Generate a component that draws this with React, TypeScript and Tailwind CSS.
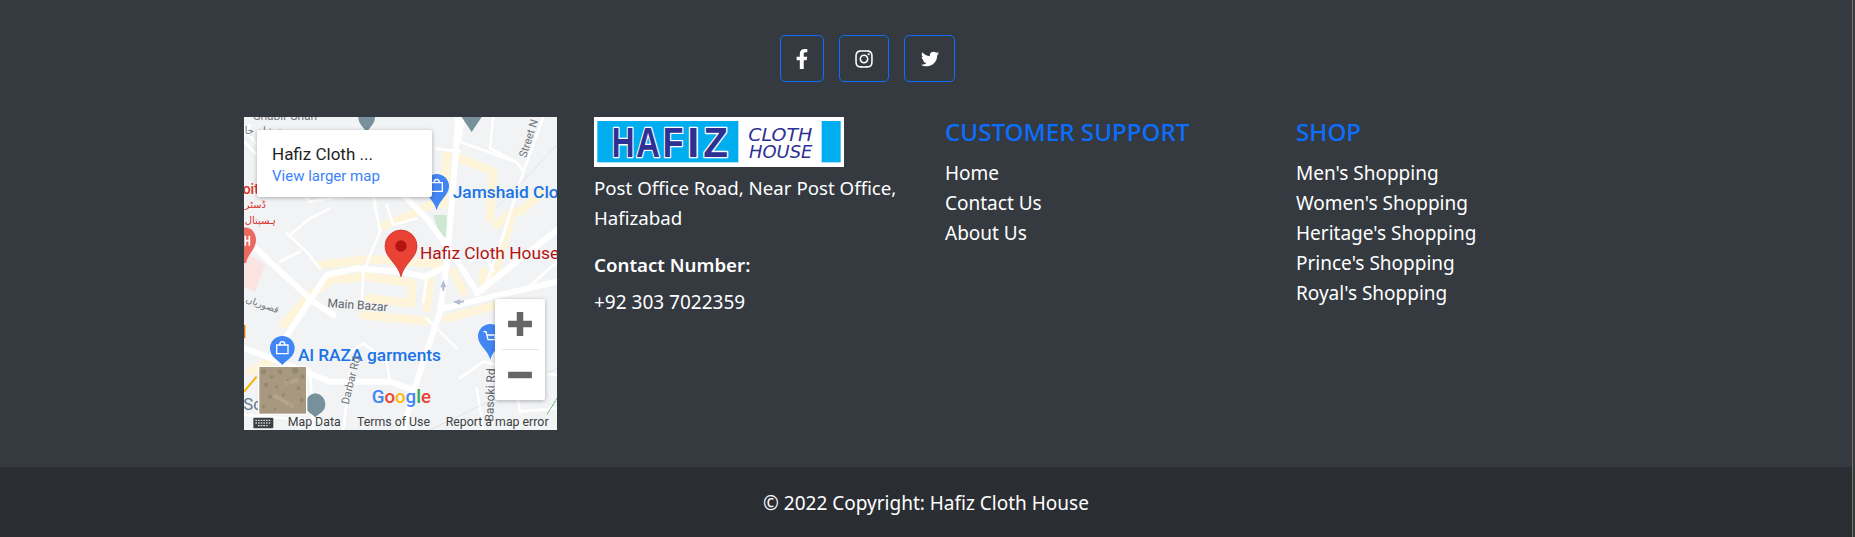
import { FaFacebookF, FaInstagram, FaTwitter } from 'react-icons/fa'

const SOCIALS = [
  { icon: FaFacebookF, size: 'w-[44px]', glyph: 20 },
  { icon: FaInstagram, size: 'w-[50px]', glyph: 20 },
  { icon: FaTwitter, size: 'w-[51px]', glyph: 18 },
]

const SUPPORT_LINKS = ['Home', 'Contact Us', 'About Us']
const SHOP_LINKS = ["Men's Shopping", "Women's Shopping", "Heritage's Shopping", "Prince's Shopping", "Royal's Shopping"]

// coordinates are 3x map pixels, taken with the map's corner at (42, 36)
const THIN_ROADS = [
  'M690 110 L860 172',
  'M940 36 L880 200 L810 420 L760 560',
  'M700 36 L690 110',
  'M790 36 L780 130',
  'M430 270 L450 380 L400 500 L395 590',
  'M470 300 L490 360 L560 340',
  'M180 390 L240 340 L300 310',
  'M170 385 L230 440 L270 490',
  'M150 470 L210 440',
  'M42 70 L130 180 L240 290',
  'M42 110 L110 180',
  'M60 60 L42 90',
  'M240 290 L420 260',
  'M580 590 L590 510',
  'M590 640 L680 730',
  'M350 750 L400 715 L470 770 L480 830',
  'M690 820 L760 770 L880 800 L981 810',
  'M740 850 L760 975',
  'M860 860 L870 920 L981 910',
  'M360 800 L340 975',
  'M240 790 L250 975',
  'M42 930 L300 950',
  'M720 470 L760 440 L790 500',
  'M620 130 L690 140',
  'M780 130 L860 172 L880 200',
  'M880 560 L981 470',
]

const MAIN_ROADS = [
  'M685 36 L665 300 L650 480 L630 620 L550 860 L520 975',
  'M490 240 L590 340 L670 450 L740 560',
  'M165 700 L290 510 L380 490 L510 500 L585 515 L650 485',
  'M640 610 L800 572 L981 530',
  'M42 395 L130 480 L250 590 L310 630',
  'M42 730 L150 770 L300 830 L480 830 L550 855',
  'M981 375 L860 470 L740 565',
]

const YELLOW_ROADS = [
  'M270 480 L420 462 L640 478',
  'M160 660 L230 580 L300 525 L410 515 L545 535 L545 595 L415 580',
  'M400 630 L590 648',
  'M455 365 L560 320 L620 290',
  'M650 150 L640 300',
  'M690 160 L790 200 L780 340',
  'M800 360 L850 320 L800 480',
  'M870 320 L940 260',
  'M670 500 L700 560',
  'M760 500 L760 550 L810 500',
  'M600 520 L590 610',
  'M650 640 L800 600',
  'M60 800 L120 770',
]

const SATELLITE_SPOTS = [
  [100, 800, 8], [125, 815, 6], [150, 800, 7], [195, 797, 9], [218, 815, 6], [108, 840, 7],
  [140, 845, 5], [175, 830, 8], [205, 850, 6], [120, 875, 6], [160, 870, 5], [215, 885, 7],
  [100, 905, 5], [180, 900, 6], [135, 912, 4],
]

function MapCanvas() {
  return (
    <svg viewBox="42 36 939 939" className="block h-full w-full">
      <rect x="42" y="36" width="939" height="939" fill="#f2f3f5" />
      <path d="M42 440 L105 480 L75 560 L42 545 Z" fill="#fbe3e1" />
      <path d="M610 330 L650 330 L650 395 L630 395 Z" fill="#cfe8d2" />
      <g fill="none" strokeLinecap="round" strokeLinejoin="round">
        <g stroke="#fdf4d9" strokeWidth="26">
          {YELLOW_ROADS.map((d) => (
            <path key={d} d={d} />
          ))}
        </g>
        <g stroke="#ffffff" strokeWidth="8">
          {THIN_ROADS.map((d) => (
            <path key={d} d={d} />
          ))}
        </g>
        <g stroke="#ffffff" strokeWidth="18">
          {MAIN_ROADS.map((d) => (
            <path key={d} d={d} />
          ))}
        </g>
        <path d="M981 790 L600 975 M800 310 L981 120" stroke="#dadce0" strokeWidth="2" />
        <path d="M981 880 L950 930" stroke="#5fb36b" strokeWidth="3" strokeDasharray="6 4" />
      </g>

      <path d="M385 36 h50 c0 20 -14 30 -25 45 c-11 -15 -25 -25 -25 -45 Z" fill="#78909c" />
      <path d="M695 36 h60 l-30 45 Z" fill="#78909c" />

      <path d="M640 525 l9 22 h-6 v10 h-6 v-10 h-6 Z" fill="#b1bbd6" />
      <path d="M668 591 l22 -8 v5 l12 -2 v6 l-12 2 v5 Z" fill="#b1bbd6" />

      <g fontFamily="Roboto, sans-serif">
        <text x="70" y="44" fill="#70757a" fontSize="36">Shabir Shah</text>
        <text x="44" y="88" fill="#70757a" fontSize="30" fontFamily="'DejaVu Sans', sans-serif">مسجد شاہ جا</text>
        <text x="38" y="268" fill="#d9332b" fontSize="42" fontWeight="500">oit</text>
        <text x="44" y="310" fill="#d9332b" fontSize="30" fontFamily="'DejaVu Sans', sans-serif">ڈسٹر</text>
        <text x="44" y="356" fill="#d9332b" fontSize="30" fontFamily="'DejaVu Sans', sans-serif">ہسپتال</text>
        <text x="292" y="606" fill="#5f6368" fontSize="36" transform="rotate(4 292 606)">Main Bazar</text>
        <text x="46" y="590" fill="#70757a" fontSize="28" transform="rotate(20 46 590)" fontFamily="'DejaVu Sans', sans-serif">قصوریاں</text>
        <text x="668" y="280" fill="#1a73e8" fontSize="52" fontWeight="500">Jamshaid Clo</text>
        <text x="570" y="462" fill="#b31412" fontSize="52">Hafiz Cloth House</text>
        <text x="204" y="768" fill="#1a73e8" fontSize="52" fontWeight="500">Al RAZA garments</text>
        <text x="888" y="160" fill="#70757a" fontSize="33" transform="rotate(-72 888 160)">Street N</text>
        <text x="348" y="890" fill="#70757a" fontSize="33" transform="rotate(-76 358 890)">Darbar Rd</text>
        <text x="790" y="950" fill="#5f6368" fontSize="36" transform="rotate(-88 790 950)">Basoki Rd</text>
        <text x="40" y="914" fill="#5f7a8c" fontSize="50">Sc</text>
      </g>

      <path d="M513 375 a48 48 0 0 1 48 48 c0 37 -38 50 -48 92 c-10 -42 -48 -55 -48 -92 a48 48 0 0 1 48 -48 Z" fill="#ea4335" stroke="#c5221f" strokeWidth="2" />
      <circle cx="513" cy="423" r="17" fill="#b31412" />

      <path d="M620 207 a37 37 0 0 1 37 37 c0 28 -28 38 -37 72 c-9 -34 -37 -44 -37 -72 a37 37 0 0 1 37 -37 Z" fill="#4285f4" />
      <path d="M603 233 h34 v26 h-34 Z M612 233 a8 10 0 0 1 16 0" fill="none" stroke="#fff" strokeWidth="4" />

      <path d="M157 693 a37 37 0 0 1 37 37 c0 28 -28 38 -37 50 c-9 -12 -37 -22 -37 -50 a37 37 0 0 1 37 -37 Z" fill="#4285f4" />
      <path d="M140 720 h34 v26 h-34 Z M149 720 a8 10 0 0 1 16 0" fill="none" stroke="#fff" strokeWidth="4" />

      <path d="M781 657 a37 37 0 0 1 37 37 c0 28 -28 38 -37 70 c-9 -32 -37 -42 -37 -70 a37 37 0 0 1 37 -37 Z" fill="#4285f4" />
      <path d="M760 680 h8 l6 24 h22 M770 690 h28 l-4 10" fill="none" stroke="#fff" strokeWidth="4" />

      <path d="M40 368 c22 -4 38 14 38 36 c0 30 -24 40 -30 70 L40 474 Z" fill="#ea6a5e" />
      <path d="M46 392 v30 M46 407 h12 M58 392 v30" stroke="#fff" strokeWidth="5" fill="none" />
      <path d="M256 865 a32 32 0 0 1 30 32 c0 24 -20 28 -30 40 c-10 -12 -30 -16 -30 -40 a32 32 0 0 1 30 -32 Z" fill="#78909c" />
      <path d="M42 660 h4 v40 h-4 Z" fill="#e37400" />
      <path d="M42 860 L80 815" stroke="#f4b400" strokeWidth="6" />

      <text x="425" y="895" fontFamily="Roboto, sans-serif" fontSize="56" fontWeight="500">
        <tspan fill="#4285f4">G</tspan>
        <tspan fill="#ea4335">o</tspan>
        <tspan fill="#fbbc05">o</tspan>
        <tspan fill="#4285f4">g</tspan>
        <tspan fill="#34a853">l</tspan>
        <tspan fill="#ea4335">e</tspan>
      </text>

      <rect x="84" y="782" width="148" height="148" rx="6" fill="#ffffff" />
      <rect x="88" y="786" width="140" height="140" fill="#a8987f" />
      {SATELLITE_SPOTS.map(([cx, cy, r]) => (
        <circle key={`${cx}-${cy}`} cx={cx} cy={cy} r={r} fill="#7d7f62" opacity="0.55" />
      ))}
      <path d="M130 870 L190 905 M165 835 L205 825" stroke="#bfae97" strokeWidth="12" opacity="0.6" />

      <rect x="70" y="938" width="60" height="32" rx="3" fill="#3c4043" />
      <path d="M76 946 H124 M76 954 H124 M84 962 H116" stroke="#fff" strokeWidth="3" strokeDasharray="5 3" />

      <g fontFamily="Roboto, sans-serif" fontSize="37" fill="#3c4043">
        <text x="173" y="962">Map Data</text>
        <text x="381" y="962">Terms of Use</text>
        <text x="647" y="962">Report a map error</text>
      </g>
    </svg>
  )
}

function MapEmbed() {
  return (
    <div className="relative h-[313px] w-[313px] overflow-hidden">
      <MapCanvas />
      <div className="absolute left-[13px] top-[13px] h-[67px] w-[175px] rounded-[2px] bg-white pl-[15px] pt-[12px] shadow-[0_1px_4px_rgba(0,0,0,0.3)] [font-family:Roboto,sans-serif]">
        <div className="text-[17px] leading-[24px] text-[#1f1f1f]">Hafiz Cloth ...</div>
        <div className="text-[15px] leading-[20px] text-[#3b82f6]">View larger map</div>
      </div>
      <div className="absolute left-[251px] top-[182px] flex h-[101px] w-[50px] flex-col items-center rounded-[2px] bg-white shadow-[0_1px_4px_rgba(0,0,0,0.3)]">
        <svg viewBox="0 0 24 24" className="mt-[12px] h-[26px] w-[26px]">
          <path d="M9 1h6v8h8v6h-8v8H9v-8H1V9h8z" fill="#666666" />
        </svg>
        <div className="mt-[12px] h-px w-[37px] bg-[#e6e6e6]" />
        <svg viewBox="0 0 24 24" className="mt-[12px] h-[26px] w-[26px]">
          <path d="M1 9h22v6H1z" fill="#666666" />
        </svg>
      </div>
    </div>
  )
}

const HAFIZ_LETTERS = [
  { ch: 'H', x: 95, w: 68 },
  { ch: 'A', x: 168, w: 72 },
  { ch: 'F', x: 248, w: 62 },
  { ch: 'I', x: 322, w: 36 },
  { ch: 'Z', x: 370, w: 74 },
]

function Logo() {
  return (
    <svg viewBox="42 36 750 150" className="block h-[50px] w-[250px]">
      <rect x="42" y="36" width="750" height="150" fill="#ffffff" />
      <rect x="52" y="48" width="423" height="124" fill="#00aeef" />
      <rect x="725" y="48" width="57" height="124" fill="#00aeef" />
      <g fontFamily="'Liberation Sans', sans-serif" fontWeight="700" fontSize="125" strokeLinejoin="round">
        {HAFIZ_LETTERS.map(({ ch, x, w }) => (
          <text key={ch} x={x} y="155" textLength={w} lengthAdjust="spacingAndGlyphs" fill="#2e3192" stroke="#ffffff" strokeWidth="8" paintOrder="stroke">
            {ch}
          </text>
        ))}
      </g>
      <g fontFamily="'DejaVu Sans', sans-serif" fontStyle="italic" fontSize="55" fill="#2e3192">
        <text x="505" y="108" textLength="192" lengthAdjust="spacingAndGlyphs">CLOTH</text>
        <text x="507" y="159" textLength="190" lengthAdjust="spacingAndGlyphs">HOUSE</text>
      </g>
    </svg>
  )
}

function LinkColumn({ title, links }: { title: string; links: string[] }) {
  return (
    <div className="w-[351px]">
      <h5 className="text-[24.2px] font-medium leading-[29px] text-[#0d6efd]">{title}</h5>
      <ul className="mt-[12px]">
        {links.map((link) => (
          <li key={link} className="leading-[30px]">
            {link}
          </li>
        ))}
      </ul>
    </div>
  )
}

export default function App() {
  return (
    <div className="flex h-[537px]">
      <footer className="flex min-w-0 flex-1 flex-col bg-[#343a40] text-[19px] text-white [font-family:'Noto_Sans',sans-serif]">
        <div className="flex-1">
          <div className="flex justify-center gap-[15px] pr-[117px] pt-[35px]">
            {SOCIALS.map(({ icon: Icon, size, glyph }, i) => (
              <a key={i} className={`flex h-[47px] items-center justify-center rounded-[5px] border border-[#0d6efd] ${size}`}>
                <Icon size={glyph} />
              </a>
            ))}
          </div>
          <div className="mt-[35px] flex pl-[244px]">
            <div className="w-[350px]">
              <MapEmbed />
            </div>
            <div className="w-[351px]">
              <Logo />
              <p className="mt-[6px] w-[320px] text-[18.7px] leading-[30px]">Post Office Road, Near Post Office, Hafizabad</p>
              <p className="mt-[17px] text-[18.7px] font-semibold leading-[30px]">Contact Number:</p>
              <p className="mt-[7px] leading-[30px]">+92 303 7022359</p>
            </div>
            <LinkColumn title="CUSTOMER SUPPORT" links={SUPPORT_LINKS} />
            <LinkColumn title="SHOP" links={SHOP_LINKS} />
          </div>
        </div>
        <div className="flex h-[70px] items-center justify-center bg-[#2a2e33] pt-[2px]">© 2022 Copyright: Hafiz Cloth House</div>
      </footer>
      <div className="w-[3px] border-l border-[#777777] bg-[#3a3a3a]" />
    </div>
  )
}
